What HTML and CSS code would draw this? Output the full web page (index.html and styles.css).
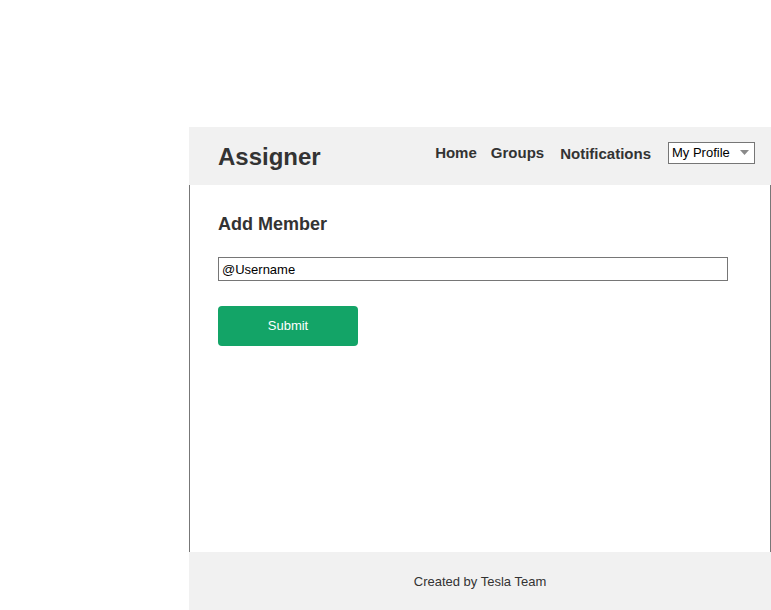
FILE: index.html
```html
<!DOCTYPE html>
<html>
<head>
<meta charset="utf-8">
<title>Assigner</title>
<link rel="stylesheet" href="styles.css">
</head>
<body>
<div class="page">
  <header class="header">
    <div class="logo">Assigner</div>
    <nav class="nav">
      <a class="nav-link nav-home" href="#">Home</a>
      <a class="nav-link nav-groups" href="#">Groups</a>
      <a class="nav-link nav-notif" href="#">Notifications</a>
      <div class="select">
        <span class="select-text">My Profile</span>
        <svg class="select-arrow" width="9" height="5" viewBox="0 0 9 5"><path d="M0 0 H9 L4.5 5 Z" fill="#8a8a8a"/></svg>
      </div>
    </nav>
  </header>
  <main class="main">
    <h2 class="title">Add Member</h2>
    <div class="input">@Username</div>
    <button class="submit">Submit</button>
  </main>
  <footer class="footer">Created by Tesla Team</footer>
</div>
</body>
</html>
```
FILE: styles.css
```css
html, body {
  margin: 0;
  padding: 0;
  background: #fff;
}
body {
  font-family: "Liberation Sans", Arial, sans-serif;
  color: #333;
}
.page {
  margin-top: 127px;
  margin-left: 189px;
  width: 582px;
}
.header {
  height: 58px;
  background: #f1f1f1;
  display: flex;
  align-items: center;
  justify-content: space-between;
  padding: 0 16px 0 29px;
  box-sizing: border-box;
}
.logo {
  font-size: 24px;
  font-weight: bold;
  color: #333;
  margin-top: 1px;
}
.nav {
  display: flex;
  align-items: center;
  margin-bottom: 8px;
}
.nav-link {
  font-size: 15px;
  font-weight: bold;
  color: #333;
  text-decoration: none;
}
.nav-home {
  margin-right: 14px;
}
.nav-groups {
  margin-right: 16px;
}
.nav-notif {
  margin-right: 17px;
  margin-top: 2px;
}
.select {
  width: 87px;
  height: 22px;
  box-sizing: border-box;
  border: 1px solid #767676;
  background: #fff;
  display: flex;
  align-items: center;
  justify-content: space-between;
  padding: 0 5px 0 3px;
  margin-top: 1px;
}
.select-text {
  font-size: 13px;
  color: #000;
}
.select-arrow {
  display: block;
}
.main {
  height: 367px;
  box-sizing: border-box;
  border-left: 1px solid #777;
  border-right: 1px solid #777;
  padding: 29px 0 0 28px;
}
.title {
  margin: 0;
  font-size: 18px;
  font-weight: bold;
  color: #333;
}
.input {
  margin-top: 22px;
  width: 510px;
  height: 24px;
  box-sizing: border-box;
  border: 1px solid #767676;
  font-size: 13px;
  color: #000;
  padding: 1px 3px 0;
  display: flex;
  align-items: center;
}
.submit {
  margin-top: 25px;
  width: 140px;
  height: 40px;
  border: none;
  border-radius: 4px;
  background: #13a467;
  color: #fff;
  font-family: "Liberation Sans", Arial, sans-serif;
  font-size: 13px;
  line-height: 39px;
  display: block;
  padding: 0 0 1px;
}
.footer {
  height: 58px;
  background: #f1f1f1;
  display: flex;
  align-items: center;
  justify-content: center;
  font-size: 13px;
  color: #333;
}
```
